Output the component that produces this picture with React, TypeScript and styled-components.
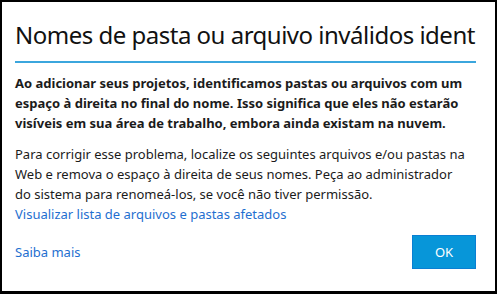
import React from 'react';
import styled, { createGlobalStyle } from 'styled-components';

const GlobalStyle = createGlobalStyle`
  html, body {
    margin: 0;
    padding: 0;
    background: #000;
  }
  * {
    box-sizing: border-box;
  }
`;

const Frame = styled.div`
  width: 497px;
  height: 294px;
  border-style: solid;
  border-color: #000;
  border-width: 2px 2px 3px 2px;
  background: #fff;
  padding: 0 19px 0 13px;
  display: flex;
  flex-direction: column;
  font-family: 'Noto Sans', 'Open Sans', Arial, sans-serif;
  color: #1b1b1b;
  overflow: hidden;

  & > * {
    flex-shrink: 0;
  }
`;

const Title = styled.h1`
  margin: 0;
  padding-top: 16px;
  height: 53px;
  font-size: 24px;
  font-weight: 400;
  line-height: 34px;
  white-space: nowrap;
  overflow: hidden;
  color: #111;
  letter-spacing: -0.5px;
`;

const Rule = styled.div`
  height: 2px;
  background: #3ba6dd;
  margin-top: 6px;
`;

const Paragraph = styled.p<{ $bold?: boolean }>`
  margin: ${p => (p.$bold ? '10px 8px 0 0' : '11px 8px 0 0')};
  font-size: 13px;
  line-height: 20px;
  font-weight: ${p => (p.$bold ? 700 : 400)};
`;

const Link = styled.a`
  display: block;
  font-size: 13px;
  line-height: 20px;
  color: #1f6fd0;
  text-decoration: none;
  cursor: pointer;
`;

const Footer = styled.div`
  display: flex;
  align-items: center;
  justify-content: space-between;
  margin-top: 11px;
`;

const OkButton = styled.button`
  width: 64px;
  height: 34px;
  background: #0796d9;
  border: 1px solid #0a7fd3;
  color: #fff;
  font-family: inherit;
  font-size: 13px;
  cursor: pointer;
`;

export default function App() {
  return (
    <>
      <GlobalStyle />
      <Frame>
        <Title>Nomes de pasta ou arquivo inválidos identificados</Title>
        <Rule />
        <Paragraph $bold>
          Ao adicionar seus projetos, identificamos pastas ou arquivos com um espaço à direita
          no final do nome. Isso significa que eles não estarão visíveis em sua área de
          trabalho, embora ainda existam na nuvem.
        </Paragraph>
        <Paragraph>
          Para corrigir esse problema, localize os seguintes arquivos e/ou pastas na Web e
          remova o espaço à direita de seus nomes. Peça ao administrador do sistema para
          renomeá-los, se você não tiver permissão.
        </Paragraph>
        <Link>Visualizar lista de arquivos e pastas afetados</Link>
        <Footer>
          <Link>Saiba mais</Link>
          <OkButton>OK</OkButton>
        </Footer>
      </Frame>
    </>
  );
}
